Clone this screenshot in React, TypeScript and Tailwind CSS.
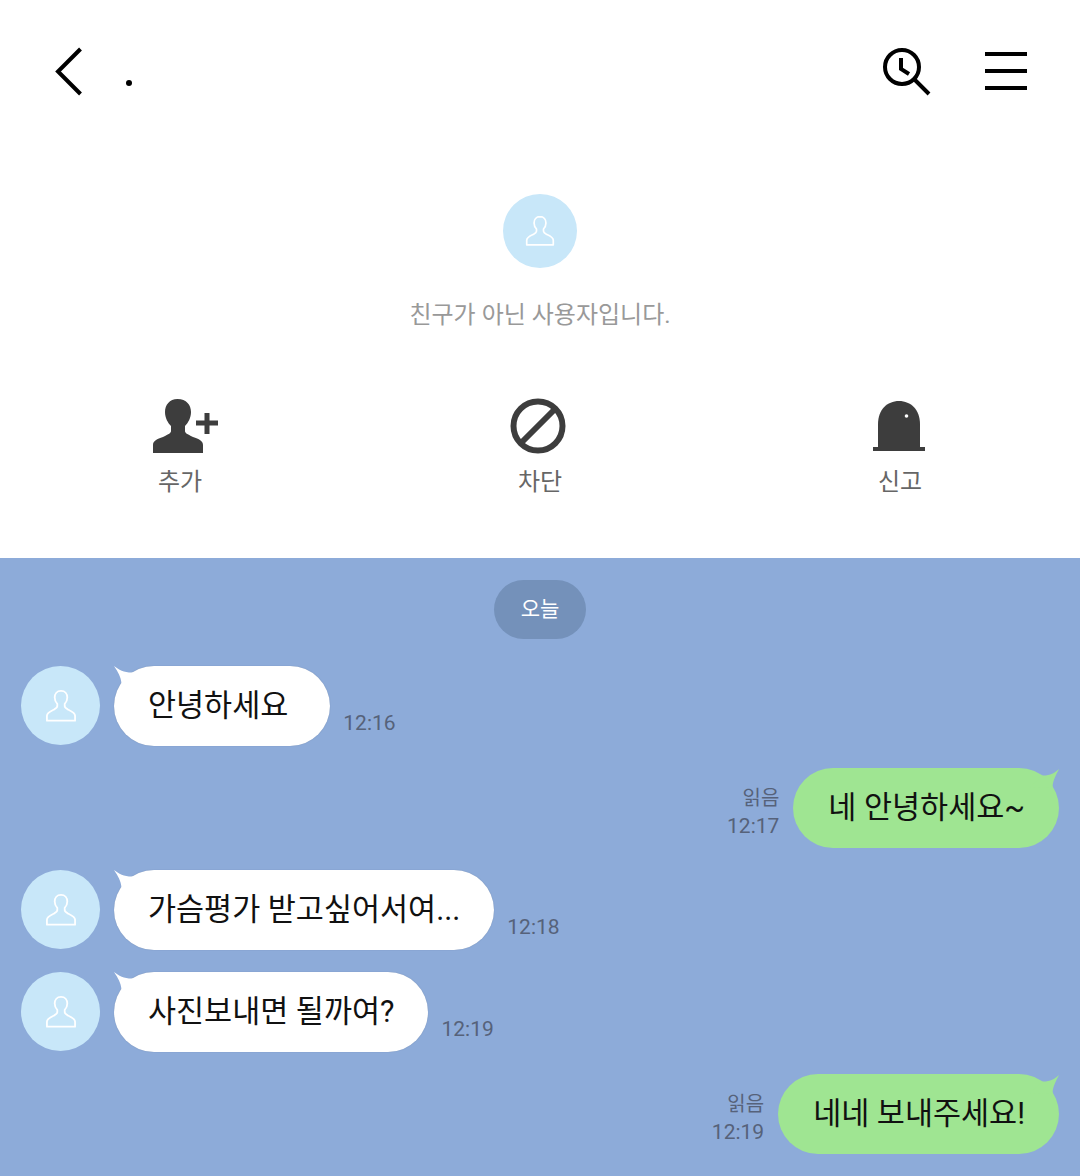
import React from 'react'

const font = "font-['Roboto','Noto_Sans_CJK_KR',sans-serif]"

function PersonIcon({ className }: { className: string }) {
  return (
    <svg viewBox="0 0 32 32" className={className} fill="none" stroke="#fff" strokeWidth="1.6" strokeLinejoin="round">
      <path d="M16 2.500c-3.600 0-5.600 2.600-5.600 6 0 2.400.9 4.200 2.300 5.600v2.200c0 1.300-1.200 2-3 2.900-3 1.400-6.200 2.800-6.200 5.400v4.400h25v-4.400c0-2.600-3.200-4-6.200-5.400-1.800-.9-3-1.600-3-2.900v-2.200c1.400-1.400 2.300-3.200 2.300-5.600 0-3.400-2-6-5.600-6z" />
    </svg>
  )
}

function Avatar() {
  return (
    <div className="w-[79px] h-[79px] rounded-full bg-[#c8e7f9] flex items-center justify-center flex-shrink-0">
      <PersonIcon className="w-[36px] h-[36px]" />
    </div>
  )
}

function Received({ text, time, pad = 'pr-[34px]' }: { text: string; time: string; pad?: string }) {
  return (
    <div className="flex items-end pl-[21px]">
      <div className="self-start">
        <Avatar />
      </div>
      <div className={`relative ml-[14px] h-[80px] rounded-[40px] bg-white pl-[34px] ${pad} flex items-center shadow-[0_0_1px_rgba(90,110,140,0.6)]`}>
        <svg viewBox="0 0 30 20" className="absolute left-0 top-0 w-[30px] h-[20px]">
          <path d="M0 0C5 4 11 7 19.500 6.500L30 20L7.500 17.500C7 11 4 6 0 0Z" fill="#fff" />
        </svg>
        <span className="relative text-[30.5px] leading-none text-[#111] whitespace-nowrap">{text}</span>
      </div>
      <span className="ml-[13px] mb-[11px] text-[21px] leading-[24px] text-[#56627a]">{time}</span>
    </div>
  )
}

function Sent({ text, time }: { text: string; time: string }) {
  return (
    <div className="flex items-end justify-end pr-[21px]">
      <div className="mr-[14px] mb-[8px] flex flex-col items-end">
        <span className="text-[20px] leading-[28px] text-[#56627a]">읽음</span>
        <span className="text-[21px] leading-[28px] text-[#56627a]">{time}</span>
      </div>
      <div className="relative h-[80px] rounded-[40px] bg-[#9fe592] pl-[35px] pr-[34px] flex items-center">
        <svg viewBox="0 0 30 20" className="absolute right-0 top-0 w-[30px] h-[20px]">
          <path d="M30 1C26 5 20 8 13 7.500L0 20L23.500 19C24 12 27 7 30 1Z" fill="#9fe592" />
        </svg>
        <span className="relative text-[30.5px] leading-none text-[#111] whitespace-nowrap">{text}</span>
      </div>
    </div>
  )
}

function ActionItem({ icon, label }: { icon: React.ReactNode; label: string }) {
  return (
    <div className="flex flex-col items-center">
      <div className="h-[58px] flex items-center justify-center">{icon}</div>
      <span className="mt-[12px] text-[24px] leading-[30px] text-[#666]">{label}</span>
    </div>
  )
}

export default function App() {
  return (
    <div className={`w-[1080px] h-[1176px] overflow-hidden bg-white flex flex-col ${font}`}>
      {/* Header */}
      <header className="h-[142px] flex items-start justify-between pl-[54px] pr-[53px] pt-[46px]">
        <div className="flex items-center">
          <svg viewBox="0 0 30 50" className="w-[30px] h-[50px]" fill="none" stroke="#000" strokeWidth="4">
            <path d="M26.500 3L4 25.500 26.500 48" />
          </svg>
          <span className="ml-[42px] mt-[23px] w-[6px] h-[6px] rounded-full bg-black" />
        </div>
        <div className="flex items-center gap-[53px]">
          <svg viewBox="0 0 50 50" className="w-[50px] h-[50px]" fill="none" stroke="#000" strokeWidth="4">
            <circle cx="20" cy="21" r="17" />
            <path d="M32 33L47 48M19 12v11l8 5" />
          </svg>
          <div className="w-[42px] flex flex-col gap-[13px]">
            <div className="h-[4px] bg-black" />
            <div className="h-[4px] bg-black" />
            <div className="h-[4px] bg-black" />
          </div>
        </div>
      </header>

      {/* Not a friend */}
      <section className="flex flex-col items-center h-[416px] pt-[52px]">
        <div className="w-[74px] h-[74px] rounded-full bg-[#c8e7f9] flex items-center justify-center">
          <PersonIcon className="w-[34px] h-[34px]" />
        </div>
        <p className="mt-[31px] text-[24px] leading-[32px] text-[#999]">친구가 아닌 사용자입니다.</p>
        <div className="mt-[66px] w-full grid grid-cols-3">
          <ActionItem
            label="추가"
            icon={
              <svg viewBox="0 0 65 54" className="w-[65px] h-[54px] ml-[11px]" fill="#3d3d3d">
                <path d="M24.500 0c-8 0-12.500 6-12.500 13 0 6 3 11 6 14v5c0 2-2 3-8 6-6 2-10 4-10 8v8h50v-8c0-4-4-6-10-8-6-3-8-4-8-6v-5c3-3 6-8 6-14 0-7-4.500-13-13.500-13z" />
                <path d="M43 21.500h8.500V14h5v7.500H65v5h-8.500V35h-5v-8.500H43z" />
              </svg>
            }
          />
          <ActionItem
            label="차단"
            icon={
              <svg viewBox="0 0 56 56" className="w-[56px] h-[56px] mr-[5px]" fill="none" stroke="#3d3d3d" strokeWidth="6">
                <circle cx="28" cy="28" r="24.500" />
                <path d="M45 11L11 45" />
              </svg>
            }
          />
          <ActionItem
            label="신고"
            icon={
              <svg viewBox="0 0 52 52" className="w-[52px] h-[52px] mr-[2px]" fill="#3d3d3d">
                <path d="M5 47V24C5 10 14 1 26 1s21 9 21 23v23z" />
                <rect x="0" y="47" width="52" height="4" />
                <circle cx="33.500" cy="16" r="1.800" fill="#fff" />
              </svg>
            }
          />
        </div>
      </section>

      {/* Chat */}
      <main className="flex-1 bg-[#8dabd9] flex flex-col pt-[22px]">
        <div className="self-center w-[92px] h-[59px] rounded-full bg-[#7491ba] flex items-center justify-center mb-[27px]">
          <span className="text-[21px] leading-none text-white">오늘</span>
        </div>
        <div className="flex flex-col gap-[22px]">
          <Received text="안녕하세요" time="12:16" pad="pr-[42px]" />
          <Sent text="네 안녕하세요~" time="12:17" />
          <Received text="가슴평가 받고싶어서여..." time="12:18" />
          <Received text="사진보내면 될까여?" time="12:19" />
          <Sent text="네네 보내주세요!" time="12:19" />
        </div>
      </main>
    </div>
  )
}
